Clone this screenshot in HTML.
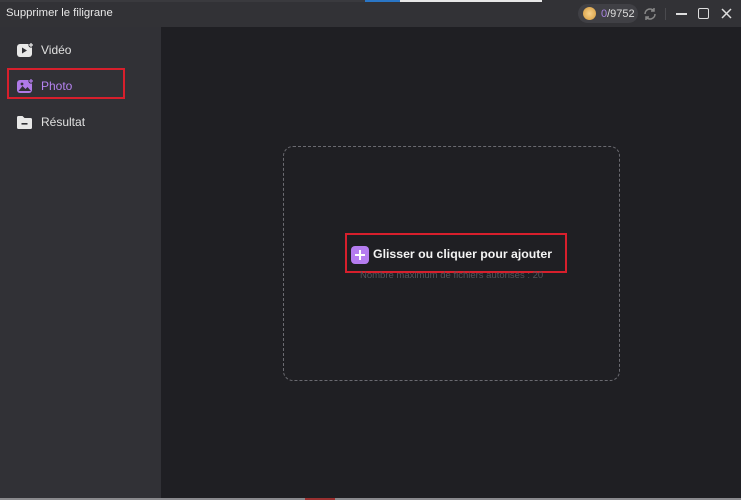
<!DOCTYPE html>
<html><head><meta charset="utf-8"><style>
*{margin:0;padding:0;box-sizing:border-box}
body{width:741px;height:500px;overflow:hidden;background:#1f1f23;font-family:"Liberation Sans",sans-serif;position:relative}
.top{position:absolute;left:0;top:0;width:741px;height:27px;background:#323236}
.strip{position:absolute;top:0;height:2px}
.side{position:absolute;left:0;top:27px;width:161px;height:473px;background:#313136}
.main{position:absolute;left:161px;top:27px;width:580px;height:473px;background:#1f1f23}
.t{position:absolute;color:#e6e6e6;font-size:12px;white-space:nowrap}
.item{position:absolute;left:17px;font-size:12px;color:#e0e0e0;display:flex;align-items:center;gap:7px}
.drop{position:absolute;left:283px;top:146px;width:337px;height:235px;border:1.5px dashed #6a6a70;border-radius:10px}
.hl{position:absolute;border:2px solid #d71f2c}
</style></head><body>
<div class="top"></div>
<div class="strip" style="left:0;width:365px;background:#3a3a3e"></div>
<div class="strip" style="left:365px;width:35px;background:#2a76c6"></div>
<div class="strip" style="left:400px;width:142px;background:#e8e8e8"></div>
<div class="t" style="left:6px;top:7px;font-size:11.3px;color:#e8e8e8">Supprimer le filigrane</div>
<div style="position:absolute;left:578px;top:4px;width:60px;height:19px;border-radius:10px;background:#404045"></div>
<div style="position:absolute;left:583px;top:7px;width:13px;height:13px;border-radius:50%;background:radial-gradient(#f6d08a,#d49a3c)"></div>
<div class="t" style="left:601px;top:8px;font-size:11px;color:#ddd"><span style="color:#a784e0">0</span>/9752</div>
<svg style="position:absolute;left:643px;top:7px" width="14" height="14" viewBox="0 0 14 14" fill="none" stroke="#888" stroke-width="1.5"><path d="M2 7a5 5 0 0 1 9-3M12 7a5 5 0 0 1-9 3"/><path d="M11 1v3H8M3 13v-3h3"/></svg>
<div style="position:absolute;left:665px;top:8px;width:1px;height:12px;background:#4a4a4e"></div>
<div style="position:absolute;left:676px;top:13px;width:11px;height:1.5px;background:#ddd"></div>
<div style="position:absolute;left:698px;top:8px;width:11px;height:11px;border:1.5px solid #ddd;border-radius:2px"></div>
<svg style="position:absolute;left:721px;top:8px" width="11" height="11" stroke="#ddd" stroke-width="1.5"><path d="M1 1L10 10M10 1L1 10"/></svg>
<div class="side"></div>
<div class="main"></div>
<div class="item" style="top:42px">
<svg width="17" height="16" viewBox="0 0 17 16"><rect x="0" y="2" width="15" height="13" rx="3" fill="#e8e8e8"/><path d="M5 5.5v6l5-3z" fill="#313136"/><circle cx="14" cy="3" r="2.6" fill="#313136"/><path d="M14 1v4M12 3h4" stroke="#e8e8e8" stroke-width="1.2"/></svg>Vidéo</div>
<div class="item" style="top:78px;color:#b583f0">
<svg width="17" height="16" viewBox="0 0 17 16"><rect x="0" y="2" width="15" height="13" rx="3" fill="#b07ae8"/><path d="M1.5 13l4-5 3 3 2-2 3.5 4z" fill="#313136"/><circle cx="5" cy="6" r="1.4" fill="#313136"/><circle cx="14" cy="3" r="2.6" fill="#313136"/><path d="M14 1v4M12 3h4" stroke="#b07ae8" stroke-width="1.2"/></svg>Photo</div>
<div class="hl" style="left:7px;top:68px;width:118px;height:31px"></div>
<div class="item" style="top:114px">
<svg width="17" height="16" viewBox="0 0 17 16"><path d="M0 3.5a1.5 1.5 0 0 1 1.5-1.5h4l2 2h6a1.5 1.5 0 0 1 1.5 1.5v8a1.5 1.5 0 0 1-1.5 1.5h-12a1.5 1.5 0 0 1-1.5-1.5z" fill="#e8e8e8"/><rect x="4.5" y="9" width="6" height="1.6" fill="#313136"/></svg>Résultat</div>
<div class="drop"></div>
<div class="hl" style="left:345px;top:233px;width:222px;height:40px"></div>
<div style="position:absolute;left:351px;top:246px;width:18px;height:18px;border-radius:4px;background:#b57cf0"></div>
<div style="position:absolute;left:355px;top:254px;width:10px;height:2px;background:#fff"></div>
<div style="position:absolute;left:359px;top:250px;width:2px;height:10px;background:#fff"></div>
<div class="t" style="left:373px;top:247px;font-size:12.3px;font-weight:bold;color:#f4f4f4">Glisser ou cliquer pour ajouter</div>
<div class="t" style="left:360px;top:270px;font-size:9.5px;color:#55555a">Nombre maximum de fichiers autorisés : 20</div>
<div style="position:absolute;left:0;top:498px;width:741px;height:2px;background:#8a8a8e"></div>
<div style="position:absolute;left:305px;top:498px;width:30px;height:2px;background:#9a3030"></div>
</body></html>
